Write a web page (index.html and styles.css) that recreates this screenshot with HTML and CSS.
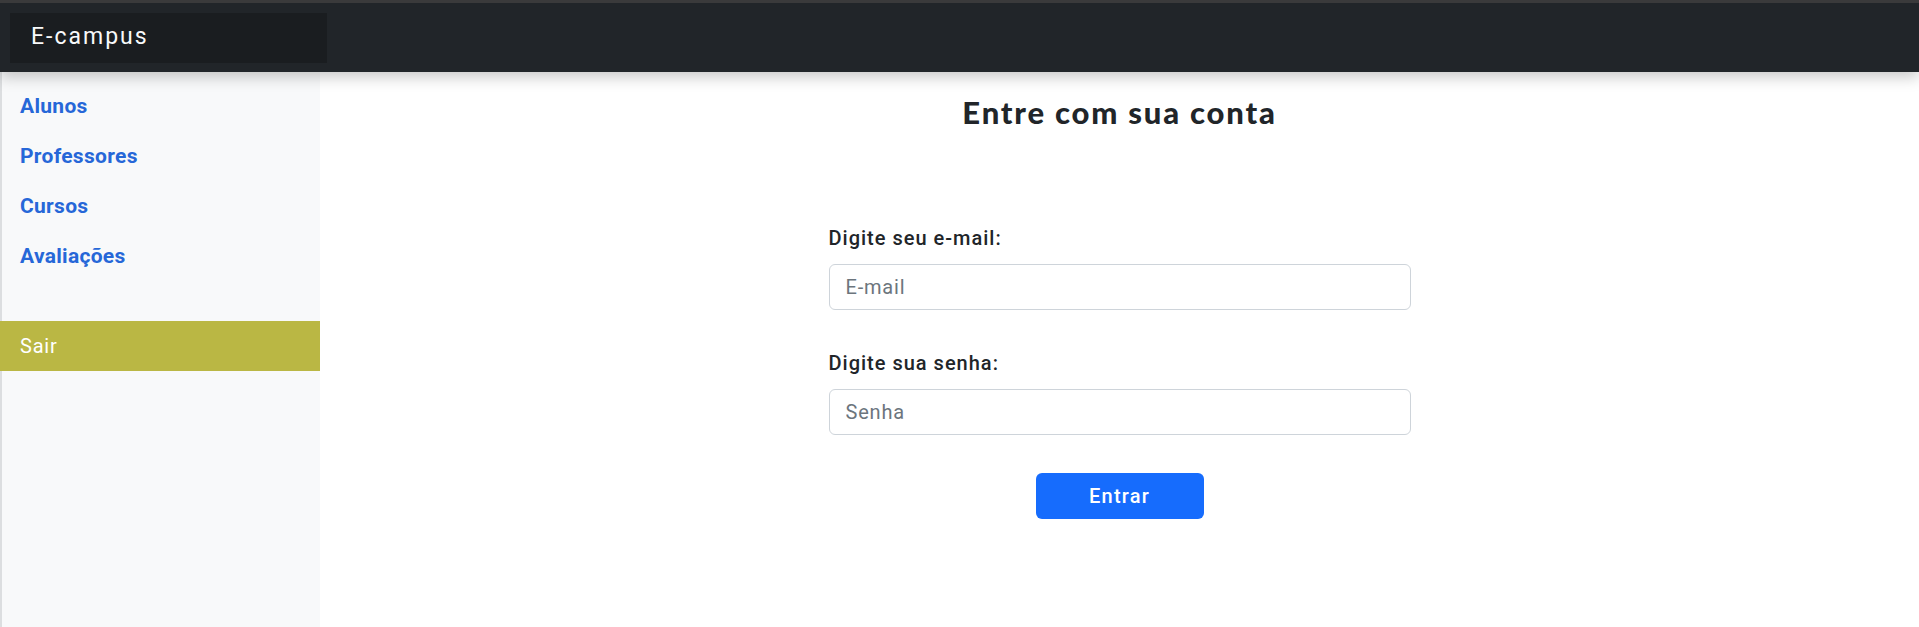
FILE: index.html
```html
<!DOCTYPE html>
<html lang="pt-BR">
<head>
<meta charset="utf-8">
<title>E-campus</title>
<link rel="stylesheet" href="styles.css">
</head>
<body>
<header class="navbar">
  <div class="brand">E-campus</div>
</header>
<div class="layout">
  <aside class="sidebar">
    <nav class="side-nav">
      <a class="side-link" href="#">Alunos</a>
      <a class="side-link" href="#">Professores</a>
      <a class="side-link" href="#">Cursos</a>
      <a class="side-link" href="#">Avaliações</a>
    </nav>
    <a class="logout" href="#">Sair</a>
  </aside>
  <main class="main">
    <h1 class="title">Entre com sua conta</h1>
    <form class="login-form">
      <label class="field-label" for="email">Digite seu e-mail:</label>
      <input class="field-input" id="email" type="email" placeholder="E-mail">
      <label class="field-label second" for="senha">Digite sua senha:</label>
      <input class="field-input" id="senha" type="password" placeholder="Senha">
      <div class="actions">
        <button class="btn-primary" type="button">Entrar</button>
      </div>
    </form>
  </main>
</div>
</body>
</html>
```
FILE: styles.css
```css
* { box-sizing: border-box; }
html, body { margin: 0; padding: 0; height: 100%; }
body {
  font-family: Roboto, "Noto Sans", sans-serif;
  background: #ffffff;
  color: #212529;
  display: flex;
  flex-direction: column;
  overflow: hidden;
}
.navbar {
  flex: none;
  height: 72px;
  background: #212529;
  border-top: 3px solid #3a3a3b;
  padding: 10px 0 0 10px;
  box-shadow: 0 5px 14px rgba(0, 0, 0, 0.22);
  position: relative;
  z-index: 2;
}
.brand {
  width: 317px;
  height: 50px;
  background: #1a1d20;
  color: #f8f9fa;
  font-size: 23px;
  letter-spacing: 2px;
  line-height: 48px;
  padding-left: 21px;
}
.layout {
  flex: 1;
  display: flex;
  min-height: 0;
}
.sidebar {
  flex: none;
  width: 320px;
  background: #f8f9fa;
  border-left: 2px solid #dcdee0;
  padding-top: 9px;
}
.side-nav { display: flex; flex-direction: column; }
.side-link {
  display: block;
  height: 50px;
  line-height: 50px;
  padding-left: 18px;
  color: #2667d8;
  font-weight: 700;
  font-size: 21px;
  letter-spacing: 0.3px;
  text-decoration: none;
}
.logout {
  display: block;
  margin-top: 40px;
  margin-left: -2px;
  height: 50px;
  line-height: 50px;
  padding-left: 20px;
  background: #bab744;
  color: #ffffff;
  font-size: 20px;
  letter-spacing: 0.8px;
  text-decoration: none;
}
.main {
  flex: 1;
  display: flex;
  flex-direction: column;
  align-items: center;
  padding-top: 20px;
}
.title {
  margin: 0;
  font-family: Lato, sans-serif;
  font-weight: 900;
  font-size: 31px;
  line-height: 40px;
  letter-spacing: 1.8px;
  color: #212529;
}
.login-form {
  width: 582px;
  margin-top: 93px;
  display: flex;
  flex-direction: column;
}
.field-label {
  font-size: 20px;
  font-weight: 500;
  line-height: 27px;
  letter-spacing: 1px;
  color: #212529;
  margin-bottom: 12px;
}
.field-label.second { margin-top: 40px; }
.field-input {
  height: 46px;
  border: 1px solid #ced4da;
  border-radius: 6px;
  padding: 0 16px;
  font-family: Roboto, sans-serif;
  font-size: 20px;
  letter-spacing: 0.8px;
  color: #212529;
  background: #fff;
}
.field-input::placeholder { color: #6c757d; }
.actions {
  display: flex;
  justify-content: center;
  margin-top: 38px;
}
.btn-primary {
  width: 168px;
  height: 46px;
  border: none;
  border-radius: 6px;
  background: #166cfd;
  color: #ffffff;
  font-family: Roboto, sans-serif;
  font-size: 20px;
  font-weight: 500;
  letter-spacing: 1.2px;
  cursor: pointer;
}
```
